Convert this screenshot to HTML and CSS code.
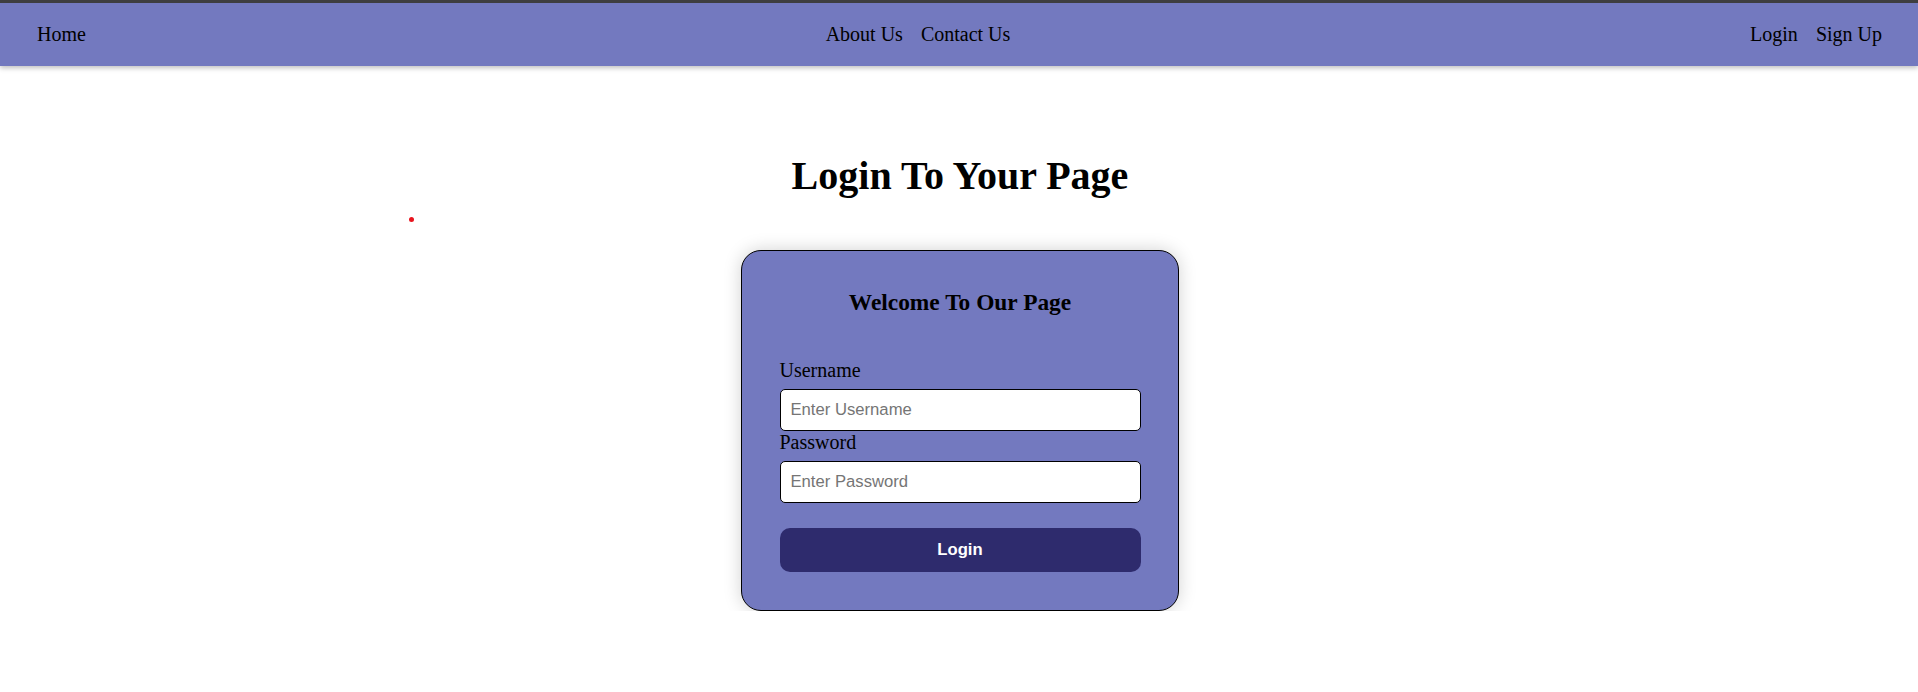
FILE: index.html
```html
<!DOCTYPE html>
<html lang="en">
<head>
<meta charset="utf-8">
<title>Login</title>
<link rel="stylesheet" href="styles.css">
</head>
<body>
<nav class="navbar">
  <div class="nav-group"><a class="nav-link" href="#">Home</a></div>
  <div class="nav-group"><a class="nav-link" href="#">About Us</a><a class="nav-link" href="#">Contact Us</a></div>
  <div class="nav-group"><a class="nav-link" href="#">Login</a><a class="nav-link" href="#">Sign Up</a></div>
</nav>
<main class="page">
  <span class="cursor-dot"></span>
  <h1 class="page-title">Login To Your Page</h1>
  <form class="login-card">
    <h2 class="card-title">Welcome To Our Page</h2>
    <label class="field-label" for="username">Username</label>
    <input class="field-input" id="username" type="text" placeholder="Enter Username">
    <label class="field-label" for="password">Password</label>
    <input class="field-input" id="password" type="password" placeholder="Enter Password">
    <button class="login-btn" type="button">Login</button>
  </form>
</main>
</body>
</html>
```

FILE: styles.css
```css
html, body {
  margin: 0;
  padding: 0;
  background: #ffffff;
}

body {
  font-family: "Liberation Serif", "Times New Roman", serif;
  color: #000;
  border-top: 3px solid #3e3e40;
}

.navbar {
  display: flex;
  justify-content: space-between;
  align-items: center;
  height: 63px;
  padding: 0 27px 0 28px;
  background: #7379bf;
  box-shadow: 0 2px 5px rgba(0, 0, 0, 0.25);
}

.nav-group {
  display: flex;
}

.nav-link {
  padding: 0 9px;
  font-size: 20px;
  color: #000;
  text-decoration: none;
  line-height: 23px;
}

.page {
  position: relative;
  display: flex;
  flex-direction: column;
  align-items: center;
  padding-left: 2px;
}

.cursor-dot {
  position: absolute;
  left: 409px;
  top: 151px;
  width: 5px;
  height: 5px;
  border-radius: 50%;
  background: #e8141e;
}

.page-title {
  margin: 87px 0 51px;
  font-size: 40px;
  line-height: 46px;
  font-weight: bold;
}

.login-card {
  box-sizing: border-box;
  width: 438px;
  padding: 37.5px;
  background: #7379bf;
  border: 1px solid #000;
  border-radius: 20px;
  box-shadow: 0 0 18px rgba(0, 0, 0, 0.18);
  display: flex;
  flex-direction: column;
}

.card-title {
  margin: 0 0 43px;
  text-align: center;
  font-size: 23.4px;
  line-height: 27px;
  font-weight: bold;
}

.field-label {
  display: block;
  font-size: 20px;
  line-height: 23px;
}

.field-input {
  box-sizing: border-box;
  margin: 7.5px 0 0;
  width: 100%;
  height: 41.5px;
  padding: 0 10px;
  border: 1px solid #000;
  border-radius: 5px;
  background: #fff;
  font-family: "Liberation Sans", Arial, sans-serif;
  font-size: 16.67px;
  color: #000;
}

.field-input::placeholder {
  color: #757575;
}

.login-btn {
  margin-top: 25px;
  height: 44.5px;
  width: 100%;
  border: none;
  border-radius: 10px;
  background: #2e2b6d;
  color: #fff;
  font-family: "Liberation Sans", Arial, sans-serif;
  font-size: 16.67px;
  font-weight: bold;
}
```
